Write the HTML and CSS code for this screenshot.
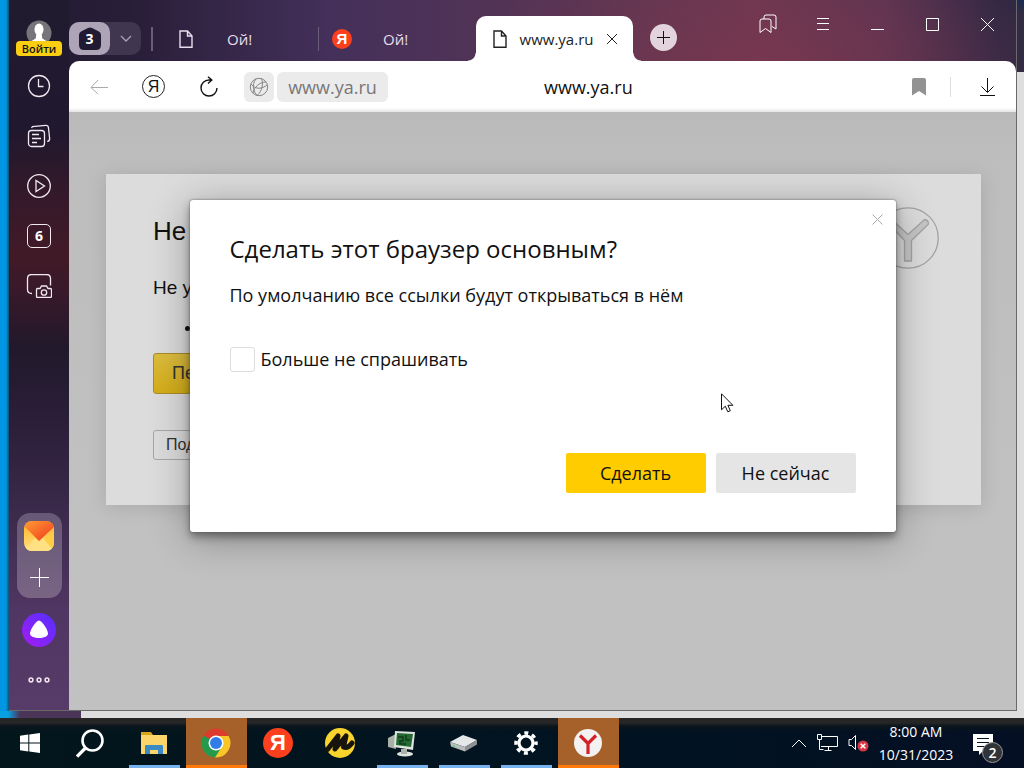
FILE: index.html
```
<!DOCTYPE html>
<html lang="ru">
<head>
<meta charset="utf-8">
<meta name="viewport" content="width=device-width, initial-scale=1">
<title>www.ya.ru</title>
<link rel="stylesheet" href="styles.css">
</head>
<body>
<div class="screen">
  <div class="desktop">
    <div class="browser">
      <nav class="sidebar" aria-label="Боковая панель">
        <button class="profile">
          <svg class="avatar" width="26" height="26" viewBox="0 0 26 26"><defs><clipPath id="av"><circle cx="13" cy="13" r="12.500"/></clipPath></defs><circle cx="13" cy="13" r="12.500" fill="#77757a"/><g clip-path="url(#av)" fill="#fff"><ellipse cx="13" cy="9.500" rx="4.500" ry="6"/><path d="M10.500 13h5l.8 5.500 5 3V26H4.700v-4.500l5-3z"/></g></svg>
          <span class="login">Войти</span>
        </button>
        <button class="side-item" aria-label="История"><svg width="24" height="24" viewBox="0 0 24 24"><circle cx="12" cy="12" r="10.500"/><path d="M11.500 5v7.500h5"/></svg></button>
        <button class="side-item" aria-label="Коллекции"><svg width="24" height="24" viewBox="0 0 24 24"><rect x="1.500" y="6.500" width="16" height="16" rx="3"/><path d="M4.500 4l1-1.500 13-1.200q2.600-.2 2.900 2l1.200 11q.3 2.700-2.300 3.200M5 10.500h7M5 14.500h9M5 18.500h5"/></svg></button>
        <button class="side-item" aria-label="Видео"><svg width="24" height="24" viewBox="0 0 24 24"><circle cx="12" cy="12" r="11.300"/><path d="M9 6.500v11l8.500-5.500z"/></svg></button>
        <button class="side-item" aria-label="Вкладки"><span class="counter">6</span></button>
        <button class="side-item" aria-label="Снимок экрана"><svg width="26" height="24" viewBox="0 0 26 24"><path d="M6 19.500q-4.500 0-4.500-4V4.500q0-4 4-4h15q4 0 4 4v7"/><path d="M10.500 15.500q0-1 1-1h2.500l1.500-2.500h5l1.500 2.500h2q1.500 0 1.500 1v6.500q0 1.500-1 1.500h-13q-1 0-1-1z"/><circle cx="18" cy="18.500" r="2.700"/></svg></button>
        <div class="pinned">
          <button class="bare" aria-label="Почта"><svg width="30" height="30" viewBox="0 0 30 30"><defs><linearGradient id="ml" x1="0" y1="0" x2="1" y2="1"><stop offset="0" stop-color="#ff9c36"/><stop offset="1" stop-color="#f0381c"/></linearGradient><linearGradient id="mb" x1="0" y1="0" x2="0" y2="1"><stop offset="0" stop-color="#ffb31e"/><stop offset="1" stop-color="#ffe184"/></linearGradient><clipPath id="mc"><rect width="30" height="30" rx="8"/></clipPath></defs><g clip-path="url(#mc)"><path fill="url(#mb)" d="M0 0h30v30H0z"/><path fill="#ffcd45" d="M0 12l15 8L30 12v18z"/><path fill="#ffe184" d="M0 30l11-13 4 3 4-3 11 13z"/><path fill="url(#ml)" d="M0 0h30v6L15 20 0 5z"/></g></svg></button>
          <button class="bare" aria-label="Добавить"><svg width="20" height="20" viewBox="0 0 20 20"><path d="M10.500 1v19M1 10.500h19" stroke="#fff"/></svg></button>
        </div>
        <button class="side-item" aria-label="Алиса"><svg class="alice" width="36" height="36" viewBox="0 0 36 36"><defs><linearGradient id="al" x1="0" y1="1" x2="1" y2="0"><stop offset="0" stop-color="#a51cf2"/><stop offset="1" stop-color="#5230ff"/></linearGradient></defs><circle cx="18" cy="18" r="17" fill="url(#al)" stroke="none"/><path fill="#fff" stroke="none" d="M18 8.500c3 0 9 9.500 9 13 0 3-4.500 4.500-9 4.500s-9-1.500-9-4.500c0-3.500 6-13 9-13z"/></svg></button>
        <button class="side-item" aria-label="Ещё"><svg width="24" height="8" viewBox="0 0 24 8"><g stroke-width="1.500"><circle cx="4" cy="4" r="1.900"/><circle cx="12" cy="4" r="1.900"/><circle cx="20" cy="4" r="1.900"/></g></svg></button>
      </nav>

      <div class="main">
        <header class="tabbar">
          <div class="tab-group">
            <button class="group-count" aria-label="Группа вкладок"><svg width="22" height="24" viewBox="0 0 22 24"><path fill="#211a33" d="M9 1q2-1.200 4 0l6.500 3.200Q22 5.500 22 8v10q0 5-5 5H5q-5 0-5-5V8q0-2.500 2.500-3.800z"/></svg><span>3</span></button>
            <button class="group-more" aria-label="Список"><svg width="12" height="8" viewBox="0 0 12 8"><path d="M1 1l5 5 5-5"/></svg></button>
          </div>
          <i class="rule"></i>
          <button class="tab tab-first"><svg width="14" height="18" viewBox="0 0 14 18"><path d="M1 1h7.500L13 6v11.300H1zM8.500 1v5H13"/></svg><span class="tab-name">Ой!</span></button>
          <i class="rule thin"></i>
          <button class="tab tab-second"><span class="ya-dot">Я</span><span class="tab-name">Ой!</span></button>
          <div class="tab tab-active"><svg width="14" height="18" viewBox="0 0 14 18"><path d="M1 1h7.500L13 6v11.300H1zM8.500 1v5H13"/></svg><span>www.ya.ru</span><button class="bare" aria-label="Закрыть вкладку"><svg width="12" height="12" viewBox="0 0 12 12"><path d="M1 1l10 10M11 1L1 11"/></svg></button></div>
          <button class="new-tab" aria-label="Новая вкладка"><svg width="13" height="13" viewBox="0 0 13 13"><path d="M6.500 0v13M0 6.500h13"/></svg></button>
          <div class="controls">
            <button aria-label="Закладки"><svg width="18" height="20" viewBox="0 0 18 20"><path d="M1 18.500V7q0-2 2-2h7q2 0 2 2v11.500L6.500 14.500z"/><path d="M5 5V3q0-2 2-2h8q2 0 2 2v12l-4-2.500"/></svg></button>
            <button aria-label="Меню"><svg width="12" height="12" viewBox="0 0 12 12"><path d="M0 .5h12M0 5.500h12M0 11.500h12"/></svg></button>
            <button aria-label="Свернуть"><svg width="13" height="13" viewBox="0 0 13 13"><path d="M0 11.500h13"/></svg></button>
            <button aria-label="Развернуть"><svg width="13" height="13" viewBox="0 0 13 13"><path d="M.5.500h12v12H.5z"/></svg></button>
            <button aria-label="Закрыть"><svg width="13" height="13" viewBox="0 0 13 13"><path d="M0 0l13 13M13 0L0 13"/></svg></button>
          </div>
        </header>

        <div class="toolbar">
          <button class="tool back" aria-label="Назад"><svg width="18" height="16" viewBox="0 0 18 16"><path d="M18 8.500H1M8 1L1 8.500 8 15"/></svg></button>
          <button class="tool"><span class="ya-ring">Я</span></button>
          <button class="tool" aria-label="Обновить"><svg width="20" height="22" viewBox="0 0 20 22"><path stroke-width="1.400" d="M12.500 4H10a8 8 0 1 0 8 8M9 .7L12.800 4 9 7.500"/></svg></button>
          <button class="site" aria-label="О сайте"><svg width="20" height="20" viewBox="0 0 20 20"><circle cx="10" cy="10" r="8.700"/><path d="M7 2c-5 6-2 13 1 16.500M12.500 1.800c2 5 1 12-4.500 16.700M2 7c5 6 11 5 16 1M4 16C5 10 11 5 17 5"/></svg></button>
          <button class="host">www.ya.ru</button>
          <div class="page-title">www.ya.ru</div>
          <button class="mark" aria-label="В закладки"><svg width="14" height="18" viewBox="0 0 14 18"><path fill="#929292" stroke="none" d="M0 2q0-2 2-2h10q2 0 2 2v15.500L7 13l-7 4.500z"/></svg></button>
          <i class="tool-rule"></i>
          <button class="download" aria-label="Загрузки"><svg width="15" height="20" viewBox="0 0 15 20"><path d="M7.500 1v14M1.500 9.500l6 6 6-6M0 18.500h15"/></svg></button>
        </div>

        <div class="page">
          <section class="card">
            <h1>Не</h1>
            <p>Не у</p>
            <ul><li></li></ul>
            <button class="reload-btn">Пе</button>
            <button class="more-btn">Под</button>
            <svg class="card-logo" width="64" height="64" viewBox="0 0 64 64"><g fill="none" stroke="#a3a3a3" stroke-width="1.300"><circle cx="32" cy="32" r="30.200"/><path fill="#c6c6c6" stroke-linejoin="round" d="M11.500 16.500l3.500-3.500 17 15.500L48.500 13.500q4 .5 4 4.500L35.500 34.500V55h-7V34.500z"/></g></svg>
          </section>
          <div class="overlay">
            <form class="dialog" role="dialog" aria-labelledby="dt">
              <button type="button" class="bare dialog-close" aria-label="Закрыть окно"><svg width="11" height="11" viewBox="0 0 11 11"><path d="M.5.500l10 10M10.500.5l-10 10"/></svg></button>
              <h2 id="dt">Сделать этот браузер основным?</h2>
              <p>По умолчанию все ссылки будут открываться в нём</p>
              <div class="check"><input type="checkbox" id="never"><label for="never">Больше не спрашивать</label></div>
              <div class="actions"><button type="button" class="primary">Сделать</button><button type="button" class="secondary">Не сейчас</button></div>
              <svg class="cursor" width="13" height="20" viewBox="0 0 13 20"><path fill="#fff" stroke="#111" d="M.5.800v16l3.800-3.600 2.500 5.600 2.500-1.100-2.400-5.400h5z"/></svg>
            </form>
          </div>
        </div>
      </div>
    </div>
  </div>

  <footer class="taskbar">
    <button class="task sys" aria-label="Пуск"><svg width="20" height="20" viewBox="0 0 20 20" fill="#fff"><path d="M0 2.800l8.300-1.200v7.900H0zM9.300 1.400L20 0v9.500H9.300zM0 10.500h8.300v7.900L0 17.200zM9.300 10.500H20V20L9.300 18.600z"/></svg></button>
    <button class="task sys" aria-label="Поиск"><svg width="28" height="29" viewBox="0 0 28 29" fill="none" stroke="#fff"><circle cx="16.500" cy="11.500" r="10" stroke-width="2.600"/><path stroke-width="3.200" d="M9.500 19L1 27.500"/></svg></button>
    <div class="apps">
      <button class="task open" aria-label="Проводник"><svg width="28" height="24" viewBox="0 0 28 24"><path fill="#d8a51e" d="M1 1h10l2 3v3H1z"/><path fill="#fbd569" d="M1 4h26v19H1z"/><path fill="#3b8ac4" d="M5 15q0-1 1-1h16q1 0 1 1v8h-5v-4h-8v4H5z"/></svg></button>
      <button class="task active" aria-label="Chrome"><svg width="30" height="30" viewBox="0 0 30 30"><path fill="#dd3b2c" d="M15 15L2.500 7.500A14.500 14.500 0 0 1 27.600 8z"/><path fill="#f8c727" d="M15 15V8h12.600A14.500 14.500 0 0 1 14 29.500z"/><path fill="#249a4d" d="M15 15l6 3.500L14 29.500A14.500 14.500 0 0 1 2.500 7.500z"/><circle cx="15" cy="15" r="7.500" fill="#fff"/><circle cx="15" cy="15" r="6" fill="#327ce8"/></svg></button>
      <button class="task"><span class="ya-dot big">Я</span></button>
      <button class="task" aria-label="M"><svg width="30" height="30" viewBox="0 0 30 30"><circle cx="15" cy="15" r="15" fill="#f9d42c"/><path fill="none" stroke="#17140d" stroke-width="5" stroke-linecap="round" stroke-linejoin="round" d="M2.500 21.500L13 8l-3 13L21 8l-2.500 11q4 2 8.500-4"/></svg></button>
      <button class="task open" aria-label="Мониторинг"><svg width="30" height="27" viewBox="0 0 30 27"><path fill="#a7b1a8" d="M1 8l8-4v15l-8-2z"/><path fill="#dfe4df" d="M8 1l20 1-2 18-19-3z"/><path fill="#236b32" d="M10 3l16 1-2 13-15-2z"/><path fill="none" stroke="#123c1c" stroke-width="1.500" d="M11 7h5v4h-3v3h6M19 5v5h4"/><ellipse cx="18" cy="24" rx="8" ry="2.500" fill="#dfe4df"/><path fill="#aab4ad" d="M14 19h6v5h-6z"/></svg></button>
      <button class="task open" aria-label="Диск"><svg width="30" height="18" viewBox="0 0 30 18"><path fill="#e6e7e8" d="M1 8L14 1l14 5-12 7z"/><path fill="#b9bcbe" d="M1 8l15 5v4.500L2 12.500z"/><path fill="#8d9193" d="M16 13l12-7v4.500l-12 7z"/><circle cx="5" cy="12" r="1" fill="#45de5a"/></svg></button>
      <button class="task open" aria-label="Параметры"><svg width="24" height="24" viewBox="0 0 24 24" fill="none" stroke="#fff"><circle cx="12" cy="12" r="10" stroke-width="3.500" stroke-dasharray="4 3.854" stroke-dashoffset="2"/><circle cx="12" cy="12" r="7" stroke-width="3.200"/></svg></button>
      <button class="task active" aria-label="Yandex"><svg width="30" height="30" viewBox="0 0 30 30"><circle cx="15" cy="15" r="14" fill="#f3f1f1"/><path fill="none" stroke="#d42027" stroke-width="3.200" d="M7 7.500l8 8 8-8M15 15v11"/></svg></button>
    </div>
    <div class="tray">
      <button class="bare" aria-label="Скрытые значки"><svg width="16" height="10" viewBox="0 0 16 10"><path d="M1 9l7-7 7 7"/></svg></button>
      <button class="bare" aria-label="Сеть"><svg width="21" height="18" viewBox="0 0 21 18"><path d="M5 2.500h15.500v10H4M11.500 12.500v4M7.500 16.500h7M.5.500h4v5h-4zM2.500 5.500v10h4"/></svg></button>
      <button class="bare" aria-label="Звук"><svg width="21" height="20" viewBox="0 0 21 20"><path d="M1 6.500h2.500l4-4v14l-4-4H1z"/><circle cx="15" cy="13" r="5.500" fill="#d93544" stroke="none"/><path stroke-width="1.500" d="M12.700 10.700l4.600 4.600M17.300 10.700l-4.600 4.600"/></svg></button>
      <div class="clock"><span>8:00 AM</span><span>10/31/2023</span></div>
      <button class="bare notes" aria-label="Уведомления"><svg width="22" height="22" viewBox="0 0 22 22"><path fill="#fff" stroke="none" d="M1 1h20v17H11l-4 4v-4H1z"/><path stroke="#061422" d="M5 5.500h12M5 9.500h12M5 13.500h8"/></svg><span class="badge">2</span></button>
    </div>
  </footer>
</div>
</body>
</html>
```

FILE: styles.css
```
* { box-sizing: border-box; }
body { margin: 0; font-family: "Open Sans", "Noto Sans", sans-serif; color: #111; }
button { margin: 0; padding: 0; border: 0; background: none; font: inherit; color: inherit; }
h1, h2, p, ul { margin: 0; font-weight: 400; }
svg { display: block; flex: none; }

.screen { display: flex; flex-direction: column; min-height: 100vh; }
.desktop {
  flex: 1; display: flex; padding: 0 7px 7px 9px;
  background:
    linear-gradient(#1b2b52 0 2px, #332b43 12px 72px, transparent 72px) right top / 7px 100% no-repeat,
    linear-gradient(90deg, #0aa0e0 8px, #4a3558 20px 81px, transparent 81px) left bottom / 100% 7px no-repeat,
    linear-gradient(90deg, #0096e4 6px, #14506e 9px, transparent 9px),
    #dedede;
}
.browser {
  flex: 1; display: flex; min-width: 0;
  border: solid #6a6a6a; border-width: 0 1px 1px 0;
  background:
    radial-gradient(ellipse 300px 110px at 76% 9%, rgba(122, 54, 78, .7), rgba(122, 54, 78, 0)),
    linear-gradient(90deg, #211931 0, #281e38 12%, #44305a 32%, #5b3553 58%, #6e3850 74%, #5a3452 87%, #302843 98%);
}

.sidebar {
  width: 60px; flex: none; display: flex; flex-direction: column; align-items: center; padding-bottom: 5px;
  background: linear-gradient(#211b30 0, #1f182e 18%, #33192a 27%, #421a27 36%, #38192a 41%, #21192b 49%, #2b1f3a 60%, #3b2a4b 72%, #503662 86%, #573b68 100%);
}
.profile { height: 61px; padding-top: 20px; display: flex; flex-direction: column; align-items: center; }
.login {
  margin-top: -5px; width: 46px; border-radius: 4px; background: #fbce12; z-index: 1;
  font-size: 11px; line-height: 15px; font-weight: 600; text-align: center;
}
.side-item { width: 60px; height: 50px; display: flex; align-items: center; justify-content: center; }
.side-item svg { fill: none; stroke: #f2e8f0; stroke-width: 1.3; }
.counter { width: 24px; height: 24px; border: 1px solid #f2e8f0; border-radius: 5px; color: #fff; font-size: 14px; line-height: 22px; font-weight: 700; }
.pinned {
  width: 45px; height: 85px; margin: auto 0 7px; padding: 8px 0 11px; border-radius: 13px; background: linear-gradient(#665876, #796484);
  display: flex; flex-direction: column; align-items: center; justify-content: space-between;
}

.main { flex: 1; min-width: 0; display: flex; flex-direction: column; }
.tabbar { height: 61px; display: flex; align-items: flex-start; color: #e9dced; font-size: 15px; }
.tab-group { margin-top: 22px; width: 72px; height: 33px; border-radius: 10px; background: #403650; display: flex; }
.group-count { width: 41px; border-radius: 10px; background: #ada5b7; display: grid; place-items: center; color: #fff; font-size: 14px; font-weight: 700; }
.group-count > * { grid-area: 1 / 1; }
.group-more { flex: 1; display: grid; place-items: center; }
.group-more svg { fill: none; stroke: #aaa0b4; stroke-width: 1.3; }
.rule { width: 2px; height: 24px; margin: 27px 0 0 10px; background: #695e79; }
.rule.thin { width: 1px; margin-left: 0; }
.tab { height: 45px; margin-top: 16px; display: flex; align-items: center; }
.tab svg { fill: none; stroke: currentColor; stroke-width: 1.4; }
.tab-first { width: 165px; padding-left: 26px; }
.tab-first .tab-name { margin-left: 34px; }
.tab-second { width: 157px; padding-left: 13px; }
.tab-second .tab-name { margin-left: 31px; }
.ya-dot { width: 20px; height: 20px; border-radius: 50%; background: #fc3f1d; color: #fff; font: 700 15px/20px "Liberation Sans", sans-serif; text-align: center; }
.ya-dot.big { width: 30px; height: 30px; font-size: 22px; line-height: 30px; }
.tab-active {
  position: relative; width: 157px; padding: 0 15px 0 17px; justify-content: space-between;
  border-radius: 10px 10px 0 0; background: #fff; color: #222; font-size: 15px;
}
.tab-active::before, .tab-active::after { content: ""; position: absolute; bottom: 0; width: 8px; height: 8px; }
.tab-active::before { left: -8px; background: radial-gradient(circle at 0 0, transparent 7px, #fff 8px); }
.tab-active::after { right: -8px; background: radial-gradient(circle at 100% 0, transparent 7px, #fff 8px); }
.tab-active .bare svg { stroke-width: 1; }
.new-tab { width: 27px; height: 27px; margin: 24px 0 0 17px; border-radius: 50%; background: #e2d3dd; display: grid; place-items: center; }
.new-tab svg { stroke: #111; }
.controls { margin-left: auto; padding-right: 1px; display: flex; }
.controls button { width: 55px; height: 48px; display: grid; place-items: center; }
.controls svg { fill: none; stroke: #fff; }

.toolbar { height: 51px; padding-left: 2px; border-radius: 10px 10px 0 0; background: linear-gradient(#fff 47px, #e4e4e4); display: flex; align-items: center; }
.tool { width: 55px; height: 50px; display: grid; place-items: center; }
.toolbar svg { fill: none; stroke: #111; }
.toolbar .back svg { stroke: #aaa; }
.ya-ring { width: 23px; height: 23px; border: 1px solid #222; border-radius: 50%; font: 400 16px/21px "Liberation Sans", sans-serif; text-align: center; }
.site, .host { height: 30px; border-radius: 6px; background: #ebebeb; }
.site { width: 30px; margin-left: 8px; display: grid; place-items: center; }
.toolbar .site svg { stroke: #858585; }
.host { width: 111px; margin-left: 3px; color: #777; font-size: 18px; }
.page-title { flex: 1; padding-left: 156px; font-size: 18px; }
.mark { width: 62px; height: 50px; display: grid; place-items: center; }
.tool-rule { width: 1px; height: 20px; background: #ddd; }
.download { width: 65px; height: 50px; padding-left: 8px; display: grid; place-items: center; }

.page { flex: 1; position: relative; overflow: hidden; padding: 62px 35px 0 37px; background: linear-gradient(#b9b9b9, #bdbdbd 40px, #c1c1c1 70%); }
.card { position: relative; min-height: 331px; padding: 40px 47px; background: #dcdcdc; box-shadow: 0 3px 18px rgba(0, 0, 0, .12); font-family: "Liberation Sans", sans-serif; }
.card h1 { font-size: 26px; line-height: 34px; }
.card p { margin-top: 28px; font-size: 19px; line-height: 24px; }
.card ul { margin-top: 16px; padding-left: 48px; line-height: 24px; }
.reload-btn, .more-btn { display: block; text-align: left; color: #333; border: 1px solid #a6a6a6; border-radius: 3px; }
.reload-btn { width: 170px; height: 41px; margin-top: 13px; padding-left: 18px; border-color: #a98c2c; background: linear-gradient(#dcbd40, #d5ad17); font-size: 18px; }
.more-btn { width: 120px; height: 30px; margin-top: 36px; padding-left: 12px; font-size: 16px; }
.card-logo { position: absolute; top: 32px; right: 41px; }

.overlay { position: absolute; inset: 0; display: flex; justify-content: center; align-items: flex-start; padding-top: 88px; }
.dialog {
  position: relative; width: 706px; max-width: 94%; padding: 31px 40px 39px; border-radius: 3px; background: #fff;
  box-shadow: 0 0 2px #555, 0 5px 9px rgba(0, 0, 0, .38), 0 6px 40px rgba(0, 0, 0, .32);
}
.dialog h2 { font-size: 24px; line-height: 36px; }
.dialog p { margin-top: 14px; font-size: 18px; line-height: 28px; }
.dialog-close { position: absolute; top: 14px; right: 13px; }
.dialog-close svg { stroke: #aaa; }
.check { margin-top: 36px; display: flex; align-items: center; gap: 6px; font-size: 18px; line-height: 28px; }
.check input { appearance: none; width: 25px; height: 25px; margin: 0; border: 1px solid #ddd; border-radius: 3px; background: #fff; }
.actions { margin-top: 80px; display: flex; justify-content: flex-end; gap: 10px; font-size: 18px; }
.actions button { width: 140px; height: 40px; border-radius: 2px; }
.primary { background: #fc0; }
.secondary { background: #e5e5e5; }
.cursor { position: absolute; left: 531px; top: 193px; }

.taskbar { height: 50px; display: flex; background: linear-gradient(#262626 0 5px, #0a151c 8px, transparent 14px), linear-gradient(90deg, #03161c, #001321 60%, #050f24); color: #fff; }
.task { width: 62px; display: grid; place-items: center; }
.sys { width: 60px; }
.apps { display: flex; margin-left: 3px; }
.open { background: linear-gradient(#76b3ee, #76b3ee) center bottom / 51px 3px no-repeat; }
.active { background: linear-gradient(#ff7a0a, #ff7a0a) center bottom / 61px 3px no-repeat, linear-gradient(#a66029, #a66029) center / 61px 100% no-repeat; }
.tray { margin-left: auto; display: flex; align-items: center; padding-right: 30px; }
.tray svg { fill: none; stroke: #fff; }
.tray > .bare + .bare { margin-left: 10px; }
.clock { width: 76px; margin: 0 18px 0 9px; display: flex; flex-direction: column; text-align: center; font-size: 14px; line-height: 23px; }
.notes { position: relative; padding-top: 2px; }
.badge { position: absolute; right: -9px; bottom: -8px; width: 21px; height: 21px; border: 1px solid #999; border-radius: 50%; background: #303338; font-size: 14px; line-height: 19px; font-weight: 600; }
.tray > .notes.notes { margin-left: 0; }
```
